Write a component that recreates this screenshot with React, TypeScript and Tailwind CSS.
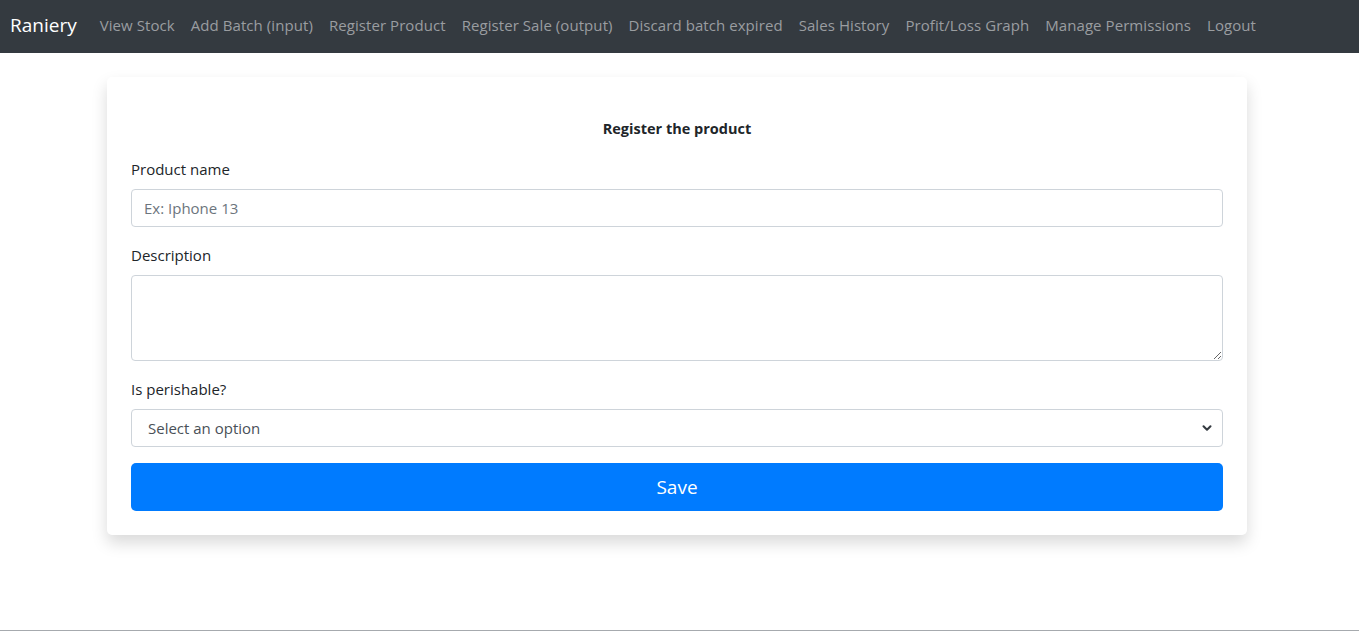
import { ChevronDown } from "lucide-react";

const links = [
  "View Stock",
  "Add Batch (input)",
  "Register Product",
  "Register Sale (output)",
  "Discard batch expired",
  "Sales History",
  "Profit/Loss Graph",
  "Manage Permissions",
  "Logout",
];

const font = { fontFamily: '"Open Sans", "Noto Sans", sans-serif' };

const App = () => {
  return (
    <div className="min-h-[631px] flex flex-col bg-white text-[#212529]" style={font}>
      {/* Navbar */}
      <nav className="h-[53px] bg-[#343a40] flex items-center pl-[10px] pb-[3px]">
        <a className="text-[19px] text-white mr-[15px] leading-[30px]">Raniery</a>
        <ul className="flex items-center">
          {links.map((l) => (
            <li key={l}>
              <a className="block px-2 text-[15px] tracking-[0.07px] text-[#9a9da0] leading-6">{l}</a>
            </li>
          ))}
        </ul>
      </nav>

      {/* Content */}
      <main className="flex-1 pt-6">
        <div className="w-[1140px] ml-[107px] bg-white rounded-[5px] shadow-[0_8px_16px_rgba(0,0,0,0.15)] px-6 pt-10 pb-6">
          <h5 className="text-center text-[14.5px] font-bold leading-6 mb-4">Register the product</h5>

          <div className="mb-4">
            <label className="block text-[15px] leading-6 mb-2">Product name</label>
            <input
              placeholder="Ex: Iphone 13"
              className="w-full h-[38px] px-3 text-[15px] border border-[#ced4da] rounded-[4px] text-[#495057] placeholder:text-[#6c757d] outline-none"
            />
          </div>

          <div className="mb-4">
            <label className="block text-[15px] leading-6 mb-2">Description</label>
            <textarea className="block w-full h-[86px] px-3 py-1.5 text-[15px] border border-[#ced4da] rounded-[4px] outline-none" />
          </div>

          <div className="mb-4">
            <label className="block text-[15px] leading-6 mb-2">Is perishable?</label>
            <div className="relative">
              <select className="w-full h-[38px] pl-4 pr-8 text-[15px] border border-[#ced4da] rounded-[4px] text-[#495057] bg-white appearance-none outline-none">
                <option>Select an option</option>
                <option>Yes</option>
                <option>No</option>
              </select>
              <ChevronDown
                className="absolute right-[9px] top-[12px] text-[#343a40] pointer-events-none"
                size={14}
                strokeWidth={3.5}
              />
            </div>
          </div>

          <button className="w-full h-12 bg-[#007bff] text-white text-[19px] rounded-[5px]">Save</button>
        </div>
      </main>

      <div className="h-px bg-[#a6aaae]" />
    </div>
  );
};

export default App;
